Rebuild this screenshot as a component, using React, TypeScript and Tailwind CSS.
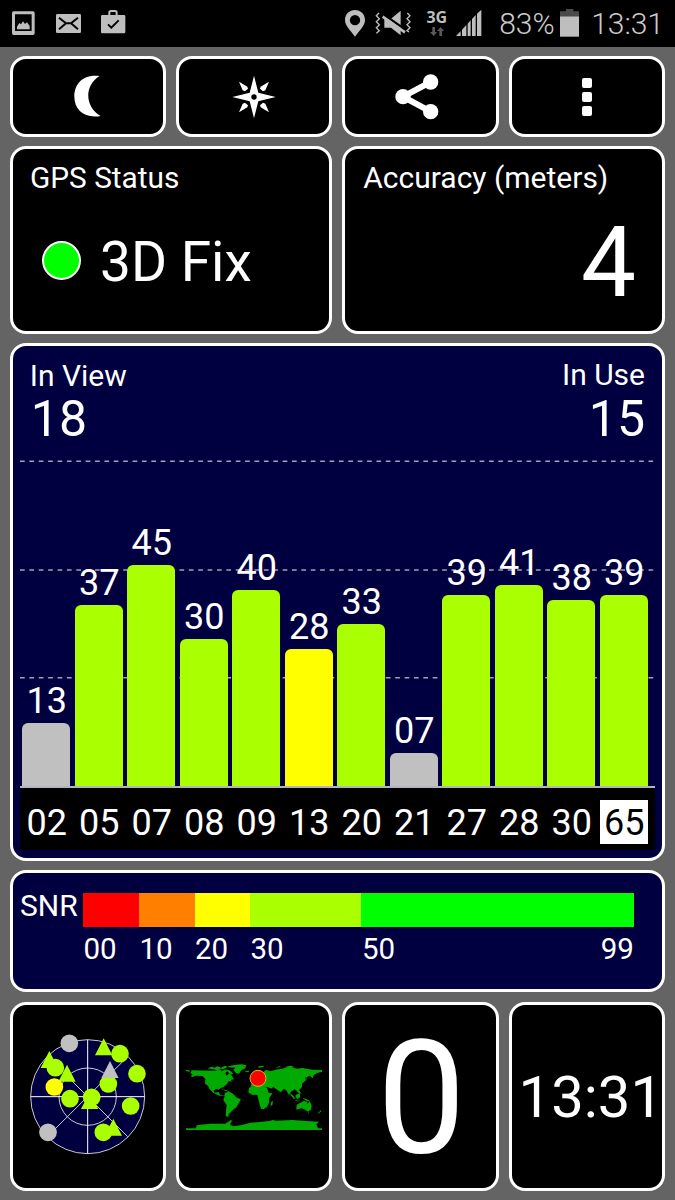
import type { ReactNode } from 'react';

const SATELLITES = [
  { id: '02', snr: 13, color: 'bg-[#c0c0c0]' },
  { id: '05', snr: 37, color: 'bg-[#aaff00]' },
  { id: '07', snr: 45, color: 'bg-[#aaff00]' },
  { id: '08', snr: 30, color: 'bg-[#aaff00]' },
  { id: '09', snr: 40, color: 'bg-[#aaff00]' },
  { id: '13', snr: 28, color: 'bg-[#ffff00]' },
  { id: '20', snr: 33, color: 'bg-[#aaff00]' },
  { id: '21', snr: 7, color: 'bg-[#c0c0c0]' },
  { id: '27', snr: 39, color: 'bg-[#aaff00]' },
  { id: '28', snr: 41, color: 'bg-[#aaff00]' },
  { id: '30', snr: 38, color: 'bg-[#aaff00]' },
  { id: '65', snr: 39, color: 'bg-[#aaff00]', active: true },
];

/** Pixels per SNR unit in the bar chart. */
const SNR_SCALE = 4.93;

const SNR_RANGES = [
  { label: '00', style: 'w-[56px] bg-[#ff0000]', labelStyle: 'w-[56px]' },
  { label: '10', style: 'w-[55.5px] bg-[#ff8000]', labelStyle: 'w-[55.5px]' },
  { label: '20', style: 'w-[55.5px] bg-[#ffff00]', labelStyle: 'w-[55.5px]' },
  { label: '30', style: 'w-[110.5px] bg-[#aaff00]', labelStyle: 'w-[111.5px]' },
  { label: '50', style: 'flex-1 bg-[#00ff00]', labelStyle: 'flex-1' },
];

interface PanelProps {
  className?: string;
  children: ReactNode;
}

const Panel = ({ className = 'bg-black', children }: PanelProps) => (
  <section className={`overflow-hidden rounded-[16px] border-[3px] border-white ${className}`}>
    {children}
  </section>
);

const StatusBar = () => (
  <header className="flex h-[47px] items-start bg-black text-[#bebebe]">
    <svg className="mt-[11px] ml-3" width="23" height="25" viewBox="36 33 69 75" fill="currentColor">
      <path fillRule="evenodd" d="M41 34h58q5 0 5 5v61q0 5-5 5H41q-5 0-5-5V39q0-5 5-5zM45 43v50h50V43z" />
      <path d="M51 88V80l7-11 5 4 6-9 6 8 6-5 8 11v10z" />
    </svg>
    <svg className="mt-3.5 ml-[21px]" width="25" height="19" viewBox="168 42 75 57">
      <rect x="168" y="42" width="75" height="57" rx="4" fill="currentColor" />
      <path d="M177 53l21 17h15l21-17M177 88l21-18M213 70l21 18" fill="none" stroke="#000" strokeWidth="6" />
    </svg>
    <svg className="mt-2.5 ml-5" width="25" height="24" viewBox="304 30 75 72">
      <path d="M329 46v-8q0-5 5-5h12q5 0 5 5v8" fill="none" stroke="currentColor" strokeWidth="6" />
      <rect x="304" y="45" width="73" height="55" rx="4" fill="currentColor" />
      <path d="M325 73l10 10 22-22" fill="none" stroke="#000" strokeWidth="6" />
    </svg>

    <div className="ml-auto flex items-start pr-[11px]">
      <svg className="mt-[9px]" width="20" height="28" viewBox="32 27 60 84" fill="currentColor">
        <path fillRule="evenodd" d="M62 30c17 0 30 13 30 30 0 18-17 32-30 50-13-18-30-32-30-50 0-17 13-30 30-30zM62 45a15 15 0 1 0 0 31 15 15 0 0 0 0-31z" />
      </svg>
      <svg className="mt-[10px] ml-[10px]" width="37" height="27" viewBox="124 30 111 81">
        <path d="M152 56h20l29-24v74l-29-23h-20z" fill="currentColor" />
        <path d="M150 43l66 47" stroke="#000" strokeWidth="7" />
        <path d="M147 50l67 47" stroke="currentColor" strokeWidth="8" />
        <path
          d="M136 39l-8 8 9 9-9 9 9 9-9 9 9 9-9 8M221 39l8 8-9 9 9 9-9 9 9 9-9 9 6 4"
          fill="none"
          stroke="currentColor"
          strokeWidth="4"
        />
      </svg>
      <div className="mt-2.5 ml-[14px] flex w-[21px] flex-col items-center">
        <span className="font-['Open_Sans'] text-[16px] leading-[15px] font-bold tracking-[-0.2px]">3G</span>
        <svg className="mt-[2px]" width="14" height="9" viewBox="0 0 42 27" fill="#5a5a5a">
          <path d="M7 0h8v15h6L11 27 0 15h7zM28 27h8V12h6L32 0 21 12h7z" />
        </svg>
      </div>
      <svg className="mt-[9px] ml-[9px]" width="26" height="28" viewBox="362 27 78 84" fill="currentColor">
        <path d="M362 108l14-14v14zM380 108V89l13-14v33zM397 108V71l9-10v47zM410 108V57l11-12v63zM425 108V41l13-12v79z" />
      </svg>
      <span className="mt-[9px] ml-[17px] w-[61px] text-[30px] leading-[30px] font-light text-[#cccccc]">83%</span>
      <svg className="mt-2" width="19" height="29" viewBox="677 24 57 87">
        <path d="M677 34h18v-7h22v7h17v15h-57z" fill="#4a4a4a" />
        <rect x="677" y="49" width="57" height="61" fill="currentColor" />
      </svg>
      <span className="mt-[9px] ml-[12px] text-[30px] leading-[30px] font-light text-[#cccccc]">13:31</span>
    </div>
  </header>
);

const Toolbar = () => (
  <div className="grid h-[81px] grid-cols-4 gap-2.5">
    <Panel className="flex items-center justify-center bg-black">
      <svg className="-translate-y-px" width="27" height="42" viewBox="221 226 81 126" fill="#fff">
        <path d="M298 229C245 222 222 256 222 290C222 333 253 357 301 349C254 323 250 258 298 229z" />
      </svg>
    </Panel>
    <Panel className="flex items-center justify-center bg-black">
      <svg width="44" height="44" viewBox="-66 -66 132 132" fill="#fff">
        <path d="M0-64L13-13 65 0 13 13 0 64-13 13-65 0-13-13z" />
        <path d="M45-46L34-20 27-17 18-25 20-31zM-45-46L-34-20-27-17-18-25-20-31zM45 46L34 20 27 17 18 25 20 31zM-45 46L-34 20-27 17-18 25-20 31z" />
        <circle r="8" fill="#000" />
      </svg>
    </Panel>
    <Panel className="flex items-center justify-center bg-black">
      <svg className="-translate-x-[3px]" width="44" height="46" viewBox="183 221 132 138">
        <path d="M290 245l-83 44 83 45" fill="none" stroke="#fff" strokeWidth="18" />
        <circle cx="290" cy="245" r="23" fill="#fff" />
        <circle cx="207" cy="289" r="23" fill="#fff" />
        <circle cx="290" cy="334" r="23" fill="#fff" />
      </svg>
    </Panel>
    <Panel className="flex flex-col items-center justify-center gap-[4px] bg-black">
      <span className="h-[10px] w-[10px] rounded-[2px] bg-white" />
      <span className="h-[10px] w-[10px] rounded-[2px] bg-white" />
      <span className="h-[10px] w-[10px] rounded-[2px] bg-white" />
    </Panel>
  </div>
);

const SatelliteChart = () => (
  <Panel className="h-[518px] bg-[#000040] pr-2 pl-[7.3px]">
    <div className="flex justify-between pt-[15px] pr-[9px] pl-2.5">
      <div>
        <div className="text-[30px] leading-[30px]">In View</div>
        <div className="mt-[3px] pl-px text-[50px] leading-[51px]">18</div>
      </div>
      <div className="-mt-px text-right">
        <div className="text-[30px] leading-[30px]">In Use</div>
        <div className="mt-1 text-[50px] leading-[51px]">15</div>
      </div>
    </div>
    <div className="relative mt-[15px] h-[328px] w-[635px]">
      <svg className="absolute inset-0" width="635" height="328" stroke="#a0a0b8" strokeWidth="1.6" strokeDasharray="4.7 4.68">
        <path d="M0 1.3H634M0 110H634M0 217.8H634" />
      </svg>
      <div className="relative flex h-full items-end gap-[4.5px] border-b-2 border-[#b4b4c0] pl-[2.5px]">
        {SATELLITES.map((sat) => (
          <div key={sat.id} className="flex w-12 flex-col items-center">
            <span className="mb-[4px] pl-px text-[36px] leading-[36px]">{String(sat.snr).padStart(2, '0')}</span>
            <div className={`w-full rounded-t-[6px] ${sat.color}`} style={{ height: sat.snr * SNR_SCALE - 1 }} />
          </div>
        ))}
      </div>
    </div>
    <div className="flex h-[62px] w-[635px] gap-[4.5px] bg-black pt-3 pl-[2.5px]">
      {SATELLITES.map((sat) => (
        <span
          key={sat.id}
          className={`h-11 w-12 pt-[5px] pl-px text-center text-[36px] leading-[36px] ${sat.active ? 'bg-white text-black' : ''}`}
        >
          {sat.id}
        </span>
      ))}
    </div>
  </Panel>
);

const SnrLegend = () => (
  <Panel className="flex h-[122px] bg-[#000040] pt-5">
    <span className="-mt-[2px] ml-[7.5px] w-[63.4px] text-[30px] leading-[30px]">SNR</span>
    <div className="w-[550.5px]">
      <div className="flex h-[34px]">
        {SNR_RANGES.map((range) => (
          <div key={range.label} className={range.style} />
        ))}
      </div>
      <div className="mt-[7px] flex text-[29.5px] leading-[30px]">
        {SNR_RANGES.map((range) => (
          <span key={range.label} className={range.labelStyle}>
            {range.label}
          </span>
        ))}
        <span>99</span>
      </div>
    </div>
  </Panel>
);

const SkyView = () => (
  <svg width="118" height="128" viewBox="87 98 354 384">
    <circle cx="263" cy="289" r="171" fill="#000040" stroke="#c8c8d4" strokeWidth="3" />
    <g fill="none" stroke="#c8c8d4" strokeWidth="3">
      <circle cx="263" cy="289" r="86" />
      <path d="M142 168l241 241M384 168L142 409" />
      <path d="M263 118v342M92 289h342" stroke="#fff" />
    </g>
    <g fill="#c0c0c0">
      <circle cx="208" cy="129" r="26.5" />
      <circle cx="144" cy="396" r="26.5" />
    </g>
    <g fill="#aaff00">
      <path d="M311 114l26 51h-52zM148 152l26 51h-52z" />
      <circle cx="360" cy="160" r="26.5" />
      <circle cx="166" cy="202" r="26.5" />
      <circle cx="411" cy="220" r="26.5" />
      <path d="M201 193l26 51h-52z" />
      <circle cx="325" cy="251" r="26.5" />
      <circle cx="210" cy="295" r="26.5" />
      <circle cx="392" cy="317" r="26.5" />
      <path d="M269 275l26 51h-52zM340 355l26 51h-52z" />
      <circle cx="275" cy="291" r="26.5" />
      <circle cx="310" cy="396" r="26.5" />
    </g>
    <path d="M330 182l26 51h-52z" fill="#c0c0c0" />
    <circle cx="163" cy="260" r="26.5" fill="#ffff00" />
  </svg>
);

const WorldMap = () => (
  <svg width="138" height="68" viewBox="44 68 414 204">
    <g fill="#00aa00">
      {/* Americas */}
      <path d="M46 88l11 2 1 5-11-3zM64 90l70 1 16-4 4 6 10-6 8 5-7 6 4 8 8-8 6 7 8 12-10 2 4 5-10-1-5 8-11 9-8 3-6 5-8-3-7 6 3 6 12-2 4 9 12 2 10-5-4 7-20-2-18-8-12-13-4-9-9-6 1-14-9-9-20-1-10 4-5-3 6-5-7-3z" />
      <path d="M163 159l12-6 15 9 7 9 15 6-8 13-6 11-11 8-8 9-4 3-1 9-8-3 2-23 1-10-10-15 4-11z" />
      <path d="M172 78l20-4 22-2 14 3-3 9-12 6-7 10-9-2-8-10 6-6-19-1z" />
      <path d="M112 84l12-5 8 3 10-4 10 4 12-6 8 4-12 6-10-1-8 5-14-3zM166 87l14 4 9 9-7 3-10-9zM180 108l8 3-2 3-7-2zM224 92l11-1 1 4-9 1zM153 147l14 2 10 5-10-2z" />
      {/* Europe and Asia */}
      <path d="M240 139l4-9 12-6 6-14 14-10 10-12 14 5 22-6 12-1 16-6 10 0 20 5 16-2 30 5 29 1v6l-12 2-12 6-4 11-8-8-14 6-3 10-7 8 0 10-9 10 7 11-11-7-9-7-11 7-6 10-8-14-8-5-8 11-12-8-11-8-7 5-10-5-10 3-14-2zM242 112l8-4 2 12-8 4zM264 78l18-2-4 4-14 2zM314 82l18-6-4 5zM346 79l16-3 10 4-12 3zM410 106l-2 12-10 10 1-6 8-8z" />
      {/* Africa */}
      <path d="M236 142l14-5 18 2 22 3 5 16 12 1-10 13-1 15-6 12-10 8-8-2-4-12-4-17-3-12-16-1-11-7zM303 184l5-3-2 14-6 2z" />
      {/* Oceania */}
      <path d="M360 158l10 10 5 8-5-1-10-12zM376 164l12-5 2 12-9 5-5-5zM370 178l20 4-8 1zM396 172l14 5 10 6-10 0zM384 147l6 10-3 4-6-8z" />
      <path d="M379 194l11-7 10-5 10 2 2 6 6-8 6 14-2 12-9 6-11-7-9-3-15 4zM412 216l4 1-2 4zM452 209l1 4-11 9 2-5z" />
      {/* Antarctica */}
      <path d="M47 264h30l2-9 40-5 46 0 17-11 3 2-6 11 8 6 24-3 30-8 35-3 25-3 5-2 12 2 48-2 40 3 40 2-8 8 5 12h12v5H47z" />
    </g>
    <circle cx="263" cy="114" r="24" fill="#ff0000" stroke="#d0c000" strokeWidth="3" />
  </svg>
);

export default function App() {
  return (
    <main className="h-[1200px] w-[675px] overflow-hidden bg-[#646464] font-[Roboto,sans-serif] text-white">
      <StatusBar />
      <div className="flex flex-col gap-[9px] pt-[9px] pr-2.5 pl-[9.5px]">
        <Toolbar />

        <div className="grid h-[188px] grid-cols-2 gap-2.5">
          <Panel className="bg-black px-[17.5px] pt-[14px]">
            <h2 className="text-[29.8px] leading-[30px]">GPS Status</h2>
            <div className="mt-[41px] flex items-center pl-3">
              <span className="-mt-[3px] h-[39px] w-[39px] rounded-full border-2 border-white bg-[#00ff00]" />
              <span className="ml-[19px] text-[55px] leading-[56px]">3D Fix</span>
            </div>
          </Panel>
          <Panel className="bg-black px-[18px] pt-[14px]">
            <h2 className="text-[30px] leading-[30px]">Accuracy (meters)</h2>
            <div className="mt-[21px] pr-2 text-right text-[98px] leading-[98px]">4</div>
          </Panel>
        </div>

        <SatelliteChart />
        <SnrLegend />

        <div className="mt-px grid h-[189px] grid-cols-4 gap-2.5">
          <Panel className="flex items-center justify-center bg-black">
            <SkyView />
          </Panel>
          <Panel className="flex items-center justify-center bg-black">
            <WorldMap />
          </Panel>
          <Panel className="flex items-center justify-center bg-black">
            <span className="mt-[2px] ml-[2px] text-[158px] leading-[160px]">0</span>
          </Panel>
          <Panel className="flex items-center justify-center bg-black">
            <span className="ml-[8px] text-[58px] leading-[58px]">13:31</span>
          </Panel>
        </div>
      </div>
    </main>
  );
}
